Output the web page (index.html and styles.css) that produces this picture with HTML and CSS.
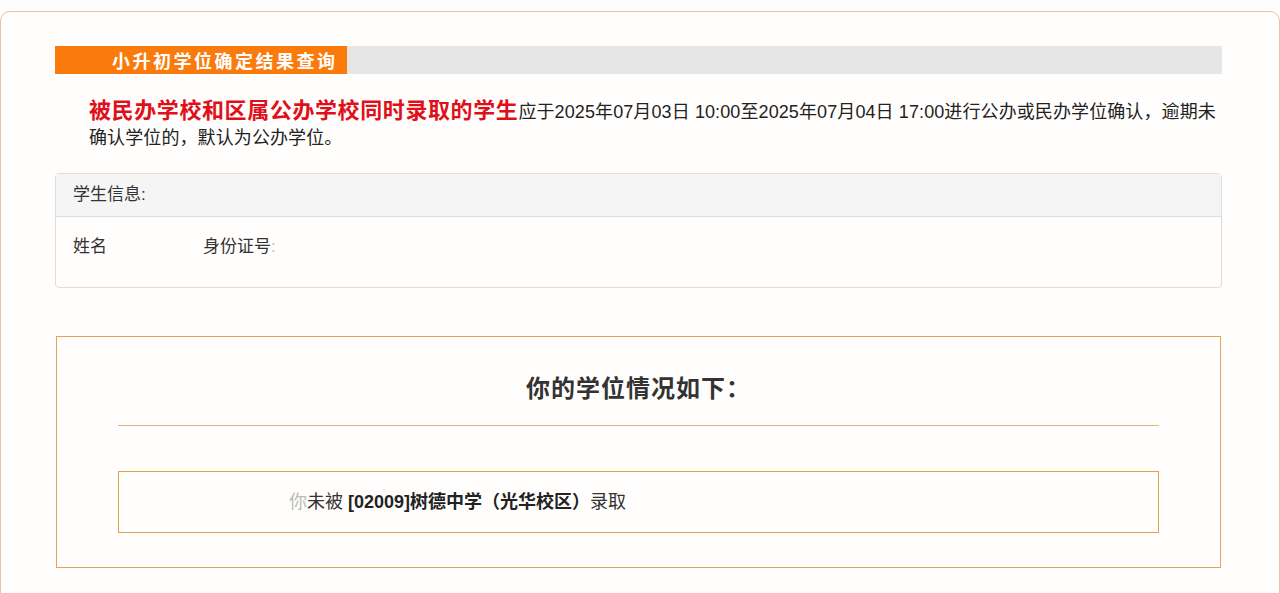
FILE: index.html
```html
<!DOCTYPE html>
<html lang="zh-CN">
<head>
    <meta charset="utf-8" />
    <title>小升初学位确定结果查询</title>
    <link rel="stylesheet" href="styles.css">
</head>
<body>
    <div class="page">
        <div class="card">
            <div class="title-bar">
                <span class="title">小升初学位确定结果查询</span>
            </div>

            <p class="notice">
                <strong class="notice-red">被民办学校和区属公办学校同时录取的学生</strong>应于2025年07月03日 10:00至2025年07月04日 17:00进行公办或民办学位确认，逾期未确认学位的，默认为公办学位。
            </p>

            <div class="panel">
                <div class="panel-head">学生信息:</div>
                <div class="panel-body">
                    <span class="field">姓名</span>
                    <span class="field">身份证号<span class="faint">:</span></span>
                </div>
            </div>

            <div class="result">
                <h2 class="result-title">你的学位情况如下：</h2>
                <div class="result-line"></div>
                <div class="result-box">
                    <span class="faint">你</span>未被 <b>[02009]树德中学（光华校区）</b>录取
                </div>
            </div>
        </div>
    </div>
</body>
</html>
```

FILE: styles.css
```css
* { box-sizing: border-box; margin: 0; padding: 0; }
body {
    font-family: "Liberation Sans", "Noto Sans CJK SC", sans-serif;
    background: #fefdfc;
    color: #333;
}
.page {
    padding-top: 11px;
    height: 593px;
    overflow: hidden;
}
.card {
    border: 1px solid #e7c3a8;
    border-radius: 10px;
    width: 1280px;
    min-height: 620px;
    padding: 34px 57px 0 54px;
    background: #fffefd;
}
.title-bar {
    background: #e6e6e6;
    height: 28px;
}
.title {
    display: inline-block;
    background: #fa7b0c;
    color: #fff;
    font-weight: bold;
    font-size: 18px;
    letter-spacing: 2.5px;
    line-height: 28px;
    width: 292px;
    padding-left: 57px;
    font-family: "Noto Sans CJK SC", sans-serif;
}
.notice {
    margin-top: 23px;
    padding-left: 34px;
    font-size: 18px;
    letter-spacing: 0.1px;
    line-height: 26px;
    color: #222;
}
.notice-red {
    color: #e0101a;
    font-size: 22px;
    line-height: 22px;
    letter-spacing: 0.6px;
    font-family: "Noto Sans CJK SC", sans-serif;
}
.panel {
    margin-top: 22px;
    border: 1px solid #ddd;
    border-radius: 4px;
}
.panel-head {
    background: #f5f5f5;
    border-bottom: 1px solid #ddd;
    height: 43px;
    line-height: 42px;
    padding: 0 17px;
    font-size: 17px;
}
.panel-body {
    display: flex;
    gap: 96px;
    padding: 18px 17px 28px;
    line-height: 24px;
    font-size: 17px;
}
.faint {
    color: #bbb;
}
.result {
    margin: 48px 1px 0;
    border: 1px solid #e3a457;
    padding: 35px 61px 34px;
}
.result-title {
    text-align: center;
    font-size: 24px;
    line-height: 30px;
    letter-spacing: 1px;
    color: #333;
    font-family: "Noto Sans CJK SC", sans-serif;
}
.result-line {
    margin-top: 23px;
    border-top: 1px solid #e8b37a;
}
.result-box {
    margin-top: 45px;
    border: 1px solid #e2a04e;
    height: 62px;
    line-height: 60px;
    padding-left: 170px;
    font-size: 18px;
    color: #333;
}
.result-box b {
    color: #222;
}
```
